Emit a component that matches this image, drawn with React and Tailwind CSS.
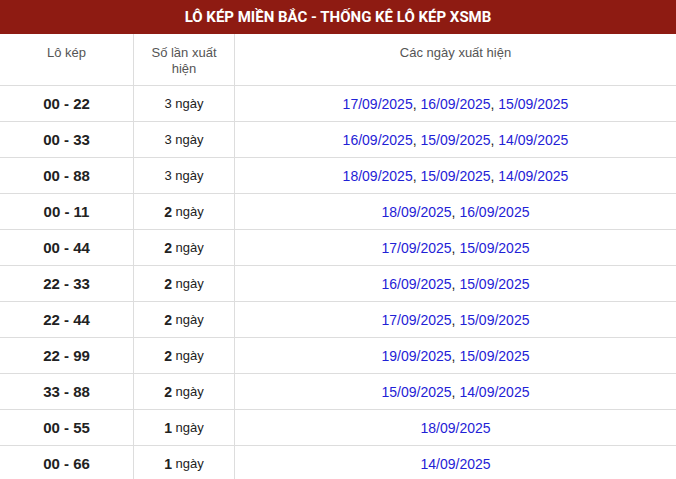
import React from 'react';

const rows = [
  { pair: '00 - 22', count: 3, dates: ['17/09/2025', '16/09/2025', '15/09/2025'] },
  { pair: '00 - 33', count: 3, dates: ['16/09/2025', '15/09/2025', '14/09/2025'] },
  { pair: '00 - 88', count: 3, dates: ['18/09/2025', '15/09/2025', '14/09/2025'] },
  { pair: '00 - 11', count: 2, dates: ['18/09/2025', '16/09/2025'] },
  { pair: '00 - 44', count: 2, dates: ['17/09/2025', '15/09/2025'] },
  { pair: '22 - 33', count: 2, dates: ['16/09/2025', '15/09/2025'] },
  { pair: '22 - 44', count: 2, dates: ['17/09/2025', '15/09/2025'] },
  { pair: '22 - 99', count: 2, dates: ['19/09/2025', '15/09/2025'] },
  { pair: '33 - 88', count: 2, dates: ['15/09/2025', '14/09/2025'] },
  { pair: '00 - 55', count: 1, dates: ['18/09/2025'] },
  { pair: '00 - 66', count: 1, dates: ['14/09/2025'] },
];

const App = () => {
  return (
    <div className="w-[676px] bg-white font-['Liberation_Sans',Arial,sans-serif] text-[#222]">
      {/* Title bar */}
      <div className="h-[34px] bg-[#8e1b12] flex items-center justify-center">
        <h2 className="text-white font-bold text-[15px] font-['Roboto',sans-serif] uppercase">
          Lô kép miền Bắc - Thống kê lô kép XSMB
        </h2>
      </div>

      {/* Header row */}
      <div className="flex border-b border-[#dddddd] text-[13px] leading-[16px] text-[#555]">
        <div className="w-[134px] pt-[11px] pb-[8px] text-center border-r border-[#dddddd]">Lô kép</div>
        <div className="w-[101px] pt-[11px] pb-[8px] px-[8px] text-center border-r border-[#dddddd]">Số lần xuất hiện</div>
        <div className="flex-1 pt-[11px] pb-[8px] text-center">Các ngày xuất hiện</div>
      </div>

      {/* Data rows */}
      {rows.map((row, idx) => (
        <div key={idx} className="flex h-[36px] border-b border-[#dddddd]">
          <div className="w-[134px] flex items-center justify-center pt-[1px] border-r border-[#dddddd] font-bold text-[15px]">
            {row.pair}
          </div>
          <div className="w-[101px] flex items-center justify-center pt-[1px] border-r border-[#dddddd] text-[13px]">
            <span className={row.count < 3 ? 'font-bold text-[14px]' : ''}>{row.count}</span>
            <span>&nbsp;ngày</span>
          </div>
          <div className="flex-1 flex items-center justify-center pt-[1px] text-[14px]">
            {row.dates.map((d, i) => (
              <span key={i} className="whitespace-pre">
                <span className="text-[#1f22d6]">{d}</span>
                {i < row.dates.length - 1 ? ', ' : ''}
              </span>
            ))}
          </div>
        </div>
      ))}
    </div>
  );
};

export default App;
